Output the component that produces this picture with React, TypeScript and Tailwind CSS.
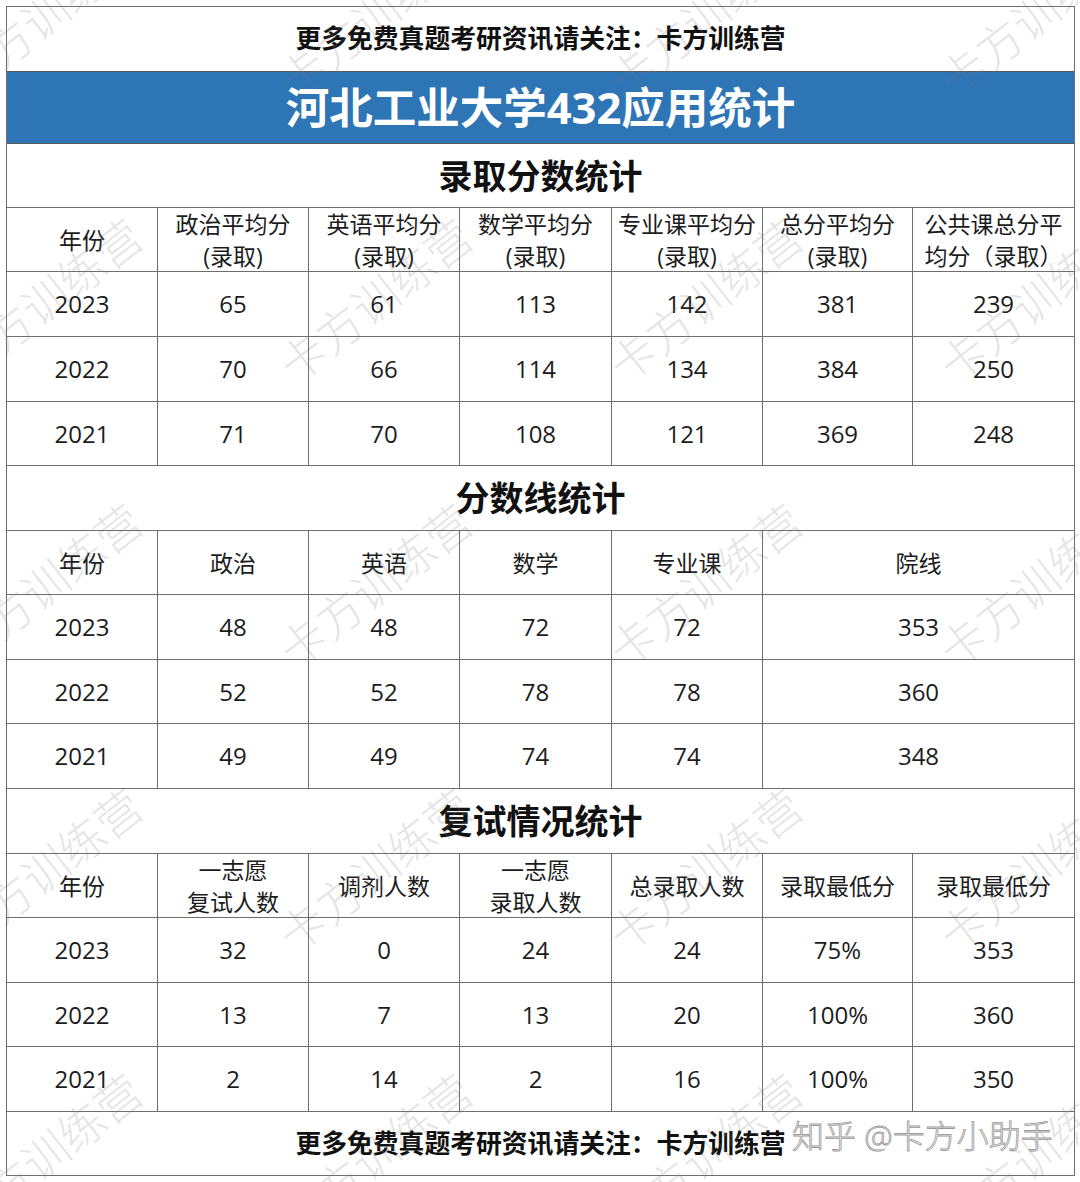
import React from "react";

const FONT = { fontFamily: '"Open Sans", "Noto Sans CJK SC", sans-serif' };

const cols = "grid grid-cols-[151px_151px_151px_152px_151px_150px_161px]";

function Cell({ children, last, span2 }: { children: React.ReactNode; last?: boolean; span2?: boolean }) {
  return (
    <div
      className={
        "flex flex-col items-center justify-center text-center text-[23px] leading-[32px] text-[#1c1c1c] " +
        (last ? "" : "border-r border-[#6e6e6e] ") +
        (span2 ? "col-span-2" : "")
      }
    >
      {children}
    </div>
  );
}

function NumCell({ v, last, span2 }: { v: string; last?: boolean; span2?: boolean }) {
  return (
    <Cell last={last} span2={span2}>
      <span className="text-[24px]">{v}</span>
    </Cell>
  );
}

function Title({ text, h }: { text: string; h: string }) {
  return (
    <div className={h + " flex items-center justify-center border-b border-[#6e6e6e]"}>
      <span className="text-[34px] font-bold text-[#111] leading-none">{text}</span>
    </div>
  );
}

const t1 = [
  ["2023", "65", "61", "113", "142", "381", "239"],
  ["2022", "70", "66", "114", "134", "384", "250"],
  ["2021", "71", "70", "108", "121", "369", "248"],
];
const t2 = [
  ["2023", "48", "48", "72", "72", "353"],
  ["2022", "52", "52", "78", "78", "360"],
  ["2021", "49", "49", "74", "74", "348"],
];
const t3 = [
  ["2023", "32", "0", "24", "24", "75%", "353"],
  ["2022", "13", "7", "13", "20", "100%", "360"],
  ["2021", "2", "14", "2", "16", "100%", "350"],
];

const h1 = ["h-[65px]", "h-[65px]", "h-[64px]"];
const h2 = ["h-[65px]", "h-[64px]", "h-[65px]"];
const h3 = ["h-[65px]", "h-[64px]", "h-[65px]"];

export default function App() {
  const wmX = [45, 375, 705, 1035];
  const wmY = [15, 300, 585, 870, 1155];
  return (
    <div className="relative w-[1080px] h-[1182px] overflow-hidden bg-white pt-[6px] pl-[6px]" style={FONT}>
      <div className="w-[1069px] border border-[#6e6e6e] flex flex-col">
        <div className="h-[65px] flex items-center justify-center border-b border-[#5a5a5a]">
          <span className="text-[25.8px] font-bold text-[#111] leading-none">更多免费真题考研资讯请关注：卡方训练营</span>
        </div>
        <div className="h-[72px] flex items-center justify-center border-b border-[#5a5a5a] bg-[#2e75b6]">
          <span className="text-[43.5px] font-bold text-white leading-none">河北工业大学432应用统计</span>
        </div>

        <Title text="录取分数统计" h="h-[64px]" />
        <div className={cols + " h-[64px] border-b border-[#6e6e6e]"}>
          <Cell>年份</Cell>
          <Cell><span>政治平均分</span><span>(录取)</span></Cell>
          <Cell><span>英语平均分</span><span>(录取)</span></Cell>
          <Cell><span>数学平均分</span><span>(录取)</span></Cell>
          <Cell><span>专业课平均分</span><span>(录取)</span></Cell>
          <Cell><span>总分平均分</span><span>(录取)</span></Cell>
          <Cell last><span>公共课总分平</span><span>均分（录取）</span></Cell>
        </div>
        {t1.map((r, i) => (
          <div key={i} className={cols + " " + h1[i] + " border-b border-[#6e6e6e]"}>
            {r.map((v, j) => (
              <NumCell key={j} v={v} last={j === 6} />
            ))}
          </div>
        ))}

        <Title text="分数线统计" h="h-[65px]" />
        <div className={cols + " h-[64px] border-b border-[#6e6e6e]"}>
          <Cell>年份</Cell>
          <Cell>政治</Cell>
          <Cell>英语</Cell>
          <Cell>数学</Cell>
          <Cell>专业课</Cell>
          <Cell last span2>院线</Cell>
        </div>
        {t2.map((r, i) => (
          <div key={i} className={cols + " " + h2[i] + " border-b border-[#6e6e6e]"}>
            {r.map((v, j) => (
              <NumCell key={j} v={v} last={j === 5} span2={j === 5} />
            ))}
          </div>
        ))}

        <Title text="复试情况统计" h="h-[65px]" />
        <div className={cols + " h-[64px] border-b border-[#6e6e6e]"}>
          <Cell>年份</Cell>
          <Cell><span>一志愿</span><span>复试人数</span></Cell>
          <Cell>调剂人数</Cell>
          <Cell><span>一志愿</span><span>录取人数</span></Cell>
          <Cell>总录取人数</Cell>
          <Cell>录取最低分</Cell>
          <Cell last>录取最低分</Cell>
        </div>
        {t3.map((r, i) => (
          <div key={i} className={cols + " " + h3[i] + " border-b border-[#6e6e6e]"}>
            {r.map((v, j) => (
              <NumCell key={j} v={v} last={j === 6} />
            ))}
          </div>
        ))}

        <div className="h-[63px] flex items-center justify-center">
          <span className="text-[25.8px] font-bold text-[#111] leading-none">更多免费真题考研资讯请关注：卡方训练营</span>
        </div>
      </div>

      <div className="pointer-events-none absolute inset-0">
        {wmY.map((y) =>
          wmX.map((x) => (
            <span
              key={x + "-" + y}
              className="absolute whitespace-nowrap text-[46px] font-light leading-none text-[rgba(120,120,120,0.2)]"
              style={{ left: x, top: y, transform: "translate(-50%,-50%) rotate(-38deg)" }}
            >
              卡方训练营
            </span>
          ))
        )}
        <span className="absolute left-[792px] top-[1120px] whitespace-nowrap text-[32px] leading-none font-light text-[#f6f6f6] [-webkit-text-stroke:0.8px_#9a9a9a]">
          知乎 @卡方小助手
        </span>
      </div>
    </div>
  );
}
